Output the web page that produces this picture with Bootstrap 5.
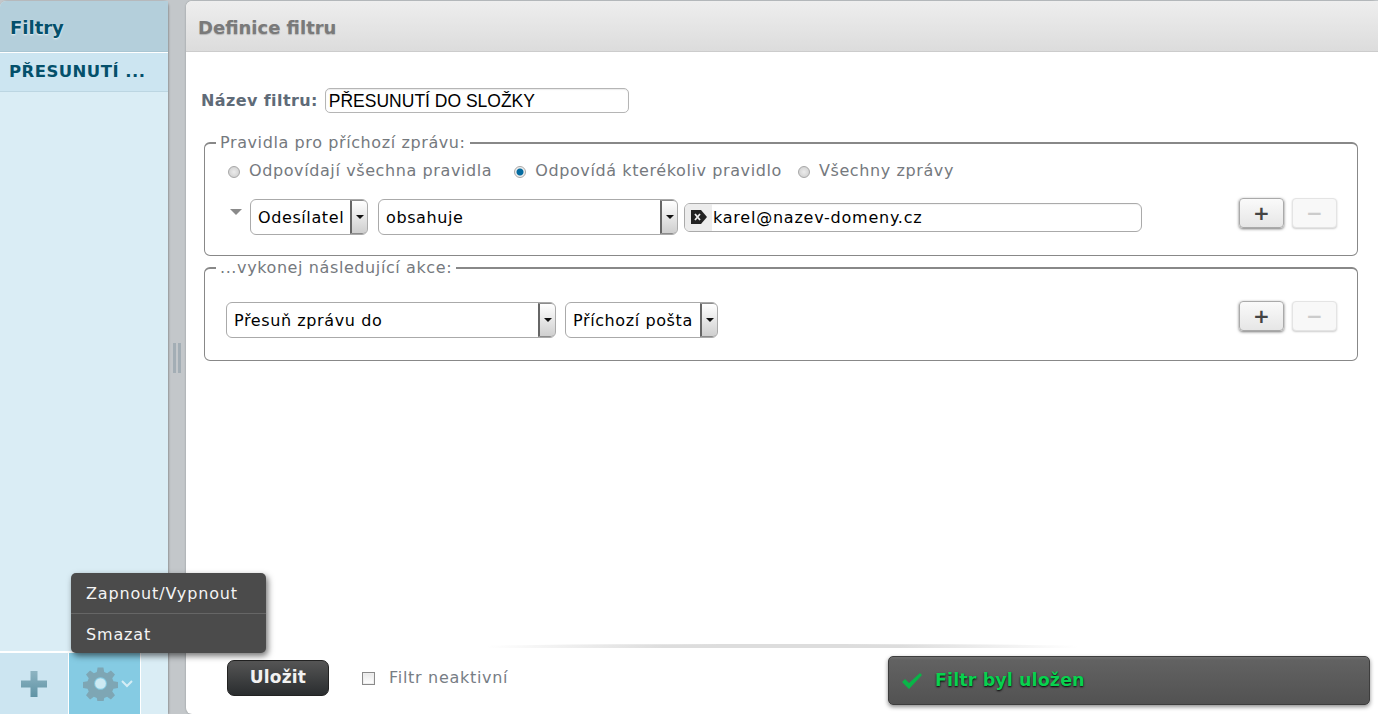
<!DOCTYPE html>
<html lang="cs">
<head>
<meta charset="utf-8">
<title>Filtry</title>
<link href="https://cdn.jsdelivr.net/npm/bootstrap@5.3.0/dist/css/bootstrap.min.css" rel="stylesheet">
<style>
html,body{height:714px;overflow:hidden}
body{font-family:"DejaVu Sans",Verdana,sans-serif;font-size:16px;background:#c3c7ca;color:#000}
.shell{height:714px}
.side{width:168px;background:#daedf5;border-radius:6px 6px 0 0;box-shadow:1px 0 2px rgba(0,0,0,.25);margin-top:1px}
.side-head{height:51px;background:#b4cfdb;color:#04506b;font-weight:700;font-size:18px;padding:0 10px;line-height:53px;border-radius:6px 0 0 0;text-shadow:0 1px 2px rgba(255,255,255,.8);border-bottom:1px solid #a9c6d3}
.side-item{height:40px;background:#cce5f1;border-top:1px solid #fff;border-bottom:1px solid #bcd6e2;color:#04506b;font-weight:700;font-size:16.5px;line-height:38px;padding-left:9px;letter-spacing:.45px;white-space:nowrap}
.side-tools{height:63px;border-top:2px solid #fff}
.tool-add{width:69px;background:#cce5f1;border-right:1px solid #fff}
.tool-gear{width:72px;background:#85cbe3;border-right:1px solid #fff;padding-left:14px;gap:3px}
.split{width:18px}
.grip{width:8px;height:30px;margin-top:343px;border-left:3px solid #a3aeb5;border-right:3px solid #a3aeb5}
.main{background:#fff;border-radius:6px 6px 0 6px;margin-top:1px;box-shadow:0 0 2px rgba(0,0,0,.3)}
.main-head{height:51px;background:linear-gradient(#eee,#dcdcdc);border-radius:6px 0 0 0;border-bottom:1px solid #ccc;color:#7a7a7a;font-weight:700;font-size:18px;line-height:53px;padding-left:12px;text-shadow:0 1px 1px rgba(0,0,0,.2)}
.main-body{padding:36px 20px 0 15px}
.name-row{gap:7px;height:25px;margin-bottom:20px}
.name-label{color:#5f6b78;font-weight:700;font-size:16px;letter-spacing:.4px}
.name-input{width:304px;height:25px;border:1px solid #b5b5b5;border-radius:5px;font-family:"Liberation Sans",Arial,sans-serif;font-size:17.5px;padding:0 3px;color:#000;background:#fff;line-height:25px;box-shadow:inset 0 1px 1px rgba(0,0,0,.08)}
.rule-set{border:1px solid #888;border-top-width:2px;border-radius:6px;padding:0 20px 0 21px;margin:0 0 2px 3px;position:relative}
.rule-set legend{float:none;width:auto;margin:-11px 0 0 -10px;padding:0 4px;font-size:16px;line-height:20px;color:#75797e;letter-spacing:.6px}
.rules{height:123px}
.acts{height:103px}
.radios{gap:22px;margin:6px 0 0 2px;height:24px;color:#75797e;letter-spacing:.6px}
.radio-item{gap:9px}
.radio-item:last-child{margin-left:-6px}
.radio-dot{width:12px;height:12px;border-radius:50%;border:1px solid #a7a7a7;background:radial-gradient(#ececec,#cbcbcb);margin-top:2px}
.radio-dot.on{background:radial-gradient(#056ba0 0 3px,#eee 4px)}
.picker{height:36px;border:1px solid #aaa;border-radius:6px;background:#fff;color:#000;padding-left:7px;letter-spacing:.6px;overflow:hidden}
.pick-txt{margin-top:2px}
.picker-arrow{width:18px;height:100%;border:1px solid #8c8c8c;border-left:2px solid #666;border-radius:0 5px 5px 0;background:linear-gradient(#fff,#cfcfcf);margin-left:auto;margin-right:-1px}
.picker-arrow i{border:4px solid transparent;border-top:4px solid #111;border-bottom:0}
.p-sender{width:118px}
.p-cond{width:300px}
.p-action{width:330px}
.p-folder{width:153px}
.collapse-mark{border:6px solid transparent;border-top:6px solid #8a8a8a;border-bottom:0;margin:10px -2px 0 4px;align-self:flex-start}
.rule-line{gap:10px}
.rules .rule-line{margin-top:16px}
.acts .rule-line{margin-top:24px;gap:9px}
.addr{width:458px;height:29px;border:1px solid #aaa;border-radius:6px;background:#fff;margin-left:-4px;overflow:hidden;letter-spacing:.77px;box-shadow:inset 0 1px 1px rgba(0,0,0,.05)}
.addr-ico{width:27px;height:100%;background:#ececec;margin-right:1px}
.addr-txt{margin-top:1px}
.pm{width:45px;height:30px;border-radius:4px;border:1px solid #aaa;background:linear-gradient(#fafafa,#e6e6e6);box-shadow:0 1px 3px rgba(0,0,0,.55);padding:0;color:#444;font-weight:700;font-size:20px;line-height:26px}
.pm.off{box-shadow:0 1px 2px rgba(0,0,0,.2);border-color:#e4e4e4;background:#f8f8f8;color:#ccc}
.pm-box{gap:8px;margin-top:-8px}
.foot{height:66px;position:relative;padding:0 0 6px 41px;gap:33px}
.foot-rule{position:absolute;top:-4px;left:300px;right:300px;height:4px;background:linear-gradient(90deg,#fff,#ddd 30%,#ddd 70%,#fff);border-radius:50% 50% 0 0}
.save{width:102px;height:36px;border-radius:7px;border:1px solid #222;background:linear-gradient(#555,#2a2d2f);color:#f2f2f2;font-weight:700;font-size:17px;padding:0;letter-spacing:.2px}
.inact{color:#777d85;gap:14px;letter-spacing:.7px}
.check{width:13px;height:13px;border:1px solid #8a8a8a;background:linear-gradient(#e8e8e8,#fff);outline:1px solid #eee;outline-offset:-2px}
.pop{position:absolute;left:71px;top:573px;width:195px;height:80px;background:#4b4b4b;border-radius:5px;box-shadow:2px 3px 6px rgba(0,0,0,.55);color:#f4f4f4;z-index:5;letter-spacing:.85px}
.pop div{height:40px;line-height:42px;padding-left:15px}
.pop div+div{border-top:1px solid #666}
.toast-box{position:absolute;left:888px;top:656px;width:482px;height:49px;background:linear-gradient(#6f6f6f 0,#626262 3px,#525252);border:1px solid #3d3d3d;border-radius:5px;box-shadow:0 2px 4px rgba(0,0,0,.45);color:#09d14f;font-weight:700;font-size:17.5px;padding-left:12px;gap:12px;z-index:5;text-shadow:0 1px 2px #000;letter-spacing:.1px}
</style>
</head>
<body>
<div class="shell d-flex">
  <aside class="side d-flex flex-column flex-shrink-0">
    <div class="side-head">Filtry</div>
    <div class="side-item">PŘESUNUTÍ ...</div>
    <div class="flex-grow-1"></div>
    <div class="side-tools d-flex">
      <div class="tool-add d-flex align-items-center justify-content-center">
        <svg width="28" height="28" viewBox="0 0 28 28"><defs><linearGradient id="pg" x1="0" y1="0" x2="0" y2="1"><stop offset="0" stop-color="#8eb4c2"/><stop offset="1" stop-color="#5f93a5"/></linearGradient></defs><path d="M10.500 1h7v9.500H27v7h-9.500V27h-7v-9.500H1v-7h9.500z" fill="url(#pg)"/></svg>
      </div>
      <div class="tool-gear d-flex align-items-center">
        <svg width="35" height="35" viewBox="0 0 36 36"><path fill="#7ea6b4" fill-rule="evenodd" d="M15 1.500h6l.8 4.700 3 1.200 3.900-2.800 4.200 4.200-2.800 3.900 1.200 3 4.700.8v6l-4.700.8-1.200 3 2.800 3.900-4.200 4.200-3.900-2.800-3 1.200-.8 4.700h-6l-.8-4.700-3-1.200-3.900 2.800-4.200-4.200 2.800-3.900-1.200-3-4.700-.8v-6l4.700-.8 1.200-3-2.800-3.900 4.200-4.200 3.900 2.800 3-1.200zM18 11.500a6.500 6.500 0 1 0 .01 0z"/><circle cx="18" cy="18" r="5.500" fill="#cdeaf3"/></svg>
        <svg width="12" height="8" viewBox="0 0 12 8"><path d="M1 1l5 5 5-5" fill="none" stroke="#d5edf5" stroke-width="2"/></svg>
      </div>
    </div>
  </aside>
  <div class="split flex-shrink-0 d-flex justify-content-center"><div class="grip"></div></div>
  <main class="main flex-grow-1 d-flex flex-column">
    <div class="main-head">Definice filtru</div>
    <div class="main-body flex-grow-1">
      <div class="name-row d-flex align-items-center">
        <span class="name-label">Název filtru:</span>
        <div class="name-input">PŘESUNUTÍ DO SLOŽKY</div>
      </div>
      <fieldset class="rule-set rules">
        <legend>Pravidla pro příchozí zprávu:</legend>
        <div class="radios d-flex align-items-center">
          <span class="radio-item d-flex align-items-center"><span class="radio-dot"></span>Odpovídají všechna pravidla</span>
          <span class="radio-item d-flex align-items-center"><span class="radio-dot on"></span>Odpovídá kterékoliv pravidlo</span>
          <span class="radio-item d-flex align-items-center"><span class="radio-dot"></span>Všechny zprávy</span>
        </div>
        <div class="rule-line d-flex align-items-center">
          <span class="collapse-mark"></span>
          <div class="picker p-sender d-flex align-items-center"><span class="pick-txt">Odesílatel</span><span class="picker-arrow d-flex align-items-center justify-content-center"><i></i></span></div>
          <div class="picker p-cond d-flex align-items-center"><span class="pick-txt">obsahuje</span><span class="picker-arrow d-flex align-items-center justify-content-center"><i></i></span></div>
          <div class="addr d-flex align-items-center">
            <span class="addr-ico d-flex align-items-center justify-content-center">
              <svg width="18" height="14" viewBox="0 0 18 14"><path d="M1 0h10l6 7-6 7H1z" fill="#222"/><path d="M5 4l5 6M10 4l-5 6" stroke="#eee" stroke-width="1.800"/></svg>
            </span><span class="addr-txt">karel@nazev-domeny.cz</span>
          </div>
          <div class="pm-box d-flex ms-auto">
            <button type="button" class="btn pm">+</button>
            <button type="button" class="btn pm off">−</button>
          </div>
        </div>
      </fieldset>
      <fieldset class="rule-set acts">
        <legend>...vykonej následující akce:</legend>
        <div class="rule-line d-flex align-items-center">
          <div class="picker p-action d-flex align-items-center"><span class="pick-txt">Přesuň zprávu do</span><span class="picker-arrow d-flex align-items-center justify-content-center"><i></i></span></div>
          <div class="picker p-folder d-flex align-items-center"><span class="pick-txt">Příchozí pošta</span><span class="picker-arrow d-flex align-items-center justify-content-center"><i></i></span></div>
          <div class="pm-box d-flex ms-auto">
            <button type="button" class="btn pm">+</button>
            <button type="button" class="btn pm off">−</button>
          </div>
        </div>
      </fieldset>
    </div>
    <div class="foot d-flex align-items-center">
      <div class="foot-rule"></div>
      <button type="button" class="btn save">Uložit</button>
      <span class="inact d-flex align-items-center"><span class="check"></span>Filtr neaktivní</span>
    </div>
  </main>
</div>
<div class="pop"><div>Zapnout/Vypnout</div><div>Smazat</div></div>
<div class="toast-box d-flex align-items-center">
  <svg width="22" height="18" viewBox="0 0 22 18"><path d="M1 10l3-3 4 4L19 1l2 2L8 17z" fill="#09b548"/></svg>
  <span>Filtr byl uložen</span>
</div>
<script src="https://cdn.jsdelivr.net/npm/bootstrap@5.3.0/dist/js/bootstrap.bundle.min.js"></script>
</body>
</html>
